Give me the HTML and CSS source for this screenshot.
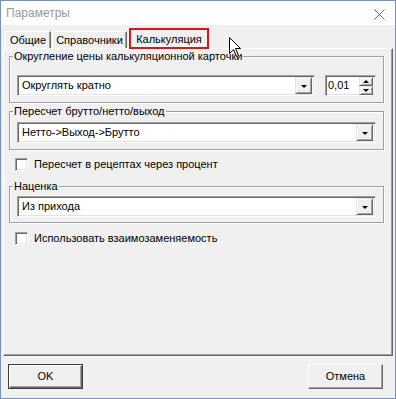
FILE: index.html
```html
<!DOCTYPE html>
<html lang="ru">
<head>
<meta charset="utf-8">
<title>Параметры</title>
<link rel="stylesheet" href="styles.css">
</head>
<body>
<div class="window">
  <div class="titlebar">
    <span class="title">Параметры</span>
    <svg class="close" width="11" height="11" viewBox="0 0 11 11"><path d="M0.5 0.5 L10.5 10.5 M10.5 0.5 L0.5 10.5" stroke="#6e6e6e" stroke-width="1" fill="none"/></svg>
  </div>
  <div class="client">
    <div class="tabs">
      <div class="tab t1">Общие</div>
      <div class="tab t2">Справочники</div>
      <div class="tab active">Калькуляция</div>
    </div>
    <div class="page">
      <fieldset class="group g1">
        <legend>Округление цены калькуляционной карточки</legend>
        <div class="row">
          <div class="combo grow"><span class="value">Округлять кратно</span><span class="drop"><i class="tri"></i></span></div>
          <div class="spin"><span class="value">0,01</span><span class="spinbtns"><span class="sb"><i class="up"></i></span><span class="sb"><i class="down"></i></span></span></div>
        </div>
      </fieldset>
      <fieldset class="group g2">
        <legend>Пересчет брутто/нетто/выход</legend>
        <div class="combo"><span class="value">Нетто-&gt;Выход-&gt;Брутто</span><span class="drop"><i class="tri"></i></span></div>
      </fieldset>
      <label class="check c1"><span class="box"></span>Пересчет в рецептах через процент</label>
      <fieldset class="group g3">
        <legend>Наценка</legend>
        <div class="combo"><span class="value">Из прихода</span><span class="drop"><i class="tri"></i></span></div>
      </fieldset>
      <label class="check c2"><span class="box"></span>Использовать взаимозаменяемость</label>
    </div>
    <div class="footer">
      <button class="btn default">OK</button>
      <button class="btn">Отмена</button>
    </div>
  </div>
  <svg class="cursor" width="13" height="21" viewBox="0 0 13 21"><path d="M0.5 0.5 L0.5 16.5 L4.5 12.5 L7.5 19.5 L9.5 18.5 L6.5 11.5 L11.5 11.5 Z" fill="#fff" stroke="#000" stroke-width="1" stroke-linejoin="miter"/></svg>
</div>
</body>
</html>
```

FILE: styles.css
```css
* { box-sizing: border-box; }
html, body { margin: 0; padding: 0; background: #fff; }
body { font-family: "Liberation Sans", Arial, sans-serif; font-size: 11px; line-height: 13px; color: #000; }

.window {
  position: relative;
  width: 396px;
  height: 399px;
  border: 1px solid #7393b7;
  background: #f0f0f0;
  display: flex;
  flex-direction: column;
}

.titlebar {
  height: 24px;
  background: #fff;
  display: flex;
  align-items: center;
  justify-content: space-between;
  padding: 0 10px 0 5px;
}
.title { font-size: 12px; color: #9a9a9a; line-height: 16px; }
.close { display: block; margin-top: 3px; }

.client {
  flex: 1;
  display: flex;
  flex-direction: column;
  padding: 0 2px;
}

.tabs {
  height: 23px;
  display: flex;
  align-items: flex-end;
  padding-left: 2px;
  position: relative;
  z-index: 1;
}
.tab {
  height: 17px;
  padding: 2px 0 0 0;
  text-align: center;
  border-top: 1px solid #fff;
  border-left: 1px solid #fff;
  border-right: 1px solid #696969;
  box-shadow: inset -1px 0 #a0a0a0;
  margin-right: 1px;
}
.t1 { width: 46px; }
.t2 { width: 75px; }
.tab.active {
  width: 80px;
  height: 21px;
  margin-bottom: -1px;
  margin-left: 1px;
  padding-top: 3px;
  border: 2px solid #d21a1a;
  box-shadow: none;
  background: #f0f0f0;
}

.page {
  height: 308px;
  border-top: 1px solid #fff;
  border-left: 1px solid #fff;
  border-right: 1px solid #696969;
  border-bottom: 1px solid #696969;
  box-shadow: inset -1px -1px #a0a0a0;
  padding: 1px 8px 0 5px;
  display: flex;
  flex-direction: column;
}

.group {
  margin: 0;
  padding: 0 7px 6px 7px;
  border: 1px solid #a0a0a0;
  box-shadow: inset 1px 1px #fff, 1px 1px #fff;
  min-width: 0;
}
.group legend {
  padding: 0 1px;
  margin-left: -4px;
  line-height: 13px;
  background: #f0f0f0;
}
.g1 { padding-top: 12px; }
.g2 { margin-top: 2px; padding-top: 4px; }
.g3 { margin-top: 9px; padding-top: 3px; padding-bottom: 5px; }

.row { display: flex; gap: 10px; }
.grow { flex: 1; }

.combo, .spin {
  height: 21px;
  background: #fff;
  border-top: 1px solid #a0a0a0;
  border-left: 1px solid #a0a0a0;
  border-right: 1px solid #fff;
  border-bottom: 1px solid #fff;
  box-shadow: inset 1px 1px #696969, inset -1px -1px #e3e3e3;
  display: flex;
  align-items: center;
  padding: 2px 2px 2px 4px;
}
.value { flex: 1; white-space: nowrap; }
.drop, .sb {
  width: 17px;
  height: 17px;
  background: #f0f0f0;
  border-top: 1px solid #e3e3e3;
  border-left: 1px solid #e3e3e3;
  border-right: 1px solid #696969;
  border-bottom: 1px solid #696969;
  box-shadow: inset 1px 1px #fff, inset -1px -1px #a0a0a0;
  display: flex;
  align-items: center;
  justify-content: center;
}
.tri {
  display: block;
  width: 0; height: 0;
  border-left: 3px solid transparent;
  border-right: 3px solid transparent;
  border-top: 3px solid #000;
  margin-top: 1px;
}
.spin { width: 51px; flex: none; padding-left: 2px; }
.spinbtns { display: flex; flex-direction: column; }
.sb { width: 14px; height: 9px; }
.up, .down {
  display: block; width: 0; height: 0;
  border-left: 3px solid transparent;
  border-right: 3px solid transparent;
}
.up { border-bottom: 3px solid #000; }
.down { border-top: 3px solid #000; }

.check {
  display: flex;
  align-items: center;
  gap: 6px;
  height: 13px;
  padding-left: 6px;
}
.box {
  width: 13px; height: 13px;
  background: #fff;
  border-top: 1px solid #a0a0a0;
  border-left: 1px solid #a0a0a0;
  border-right: 1px solid #fff;
  border-bottom: 1px solid #fff;
  box-shadow: inset 1px 1px #696969, inset -1px -1px #e3e3e3;
}
.c1 { margin-top: 8px; }
.c2 { margin-top: 9px; }

.footer {
  display: flex;
  justify-content: space-between;
  padding: 0 10px 0 5px;
  margin-top: 8px;
}
.btn {
  width: 75px;
  height: 25px;
  font: inherit;
  color: #000;
  background: #f0f0f0;
  border-top: 1px solid #fff;
  border-left: 1px solid #fff;
  border-right: 1px solid #696969;
  border-bottom: 1px solid #696969;
  box-shadow: inset -1px -1px #a0a0a0;
  padding: 0;
}
.btn.default {
  border: 1px solid #3c3c3c;
  box-shadow: inset 1px 1px #fff, inset -1px -1px #696969, inset -2px -2px #a0a0a0;
}

.cursor { position: absolute; left: 228px; top: 36px; }
```
